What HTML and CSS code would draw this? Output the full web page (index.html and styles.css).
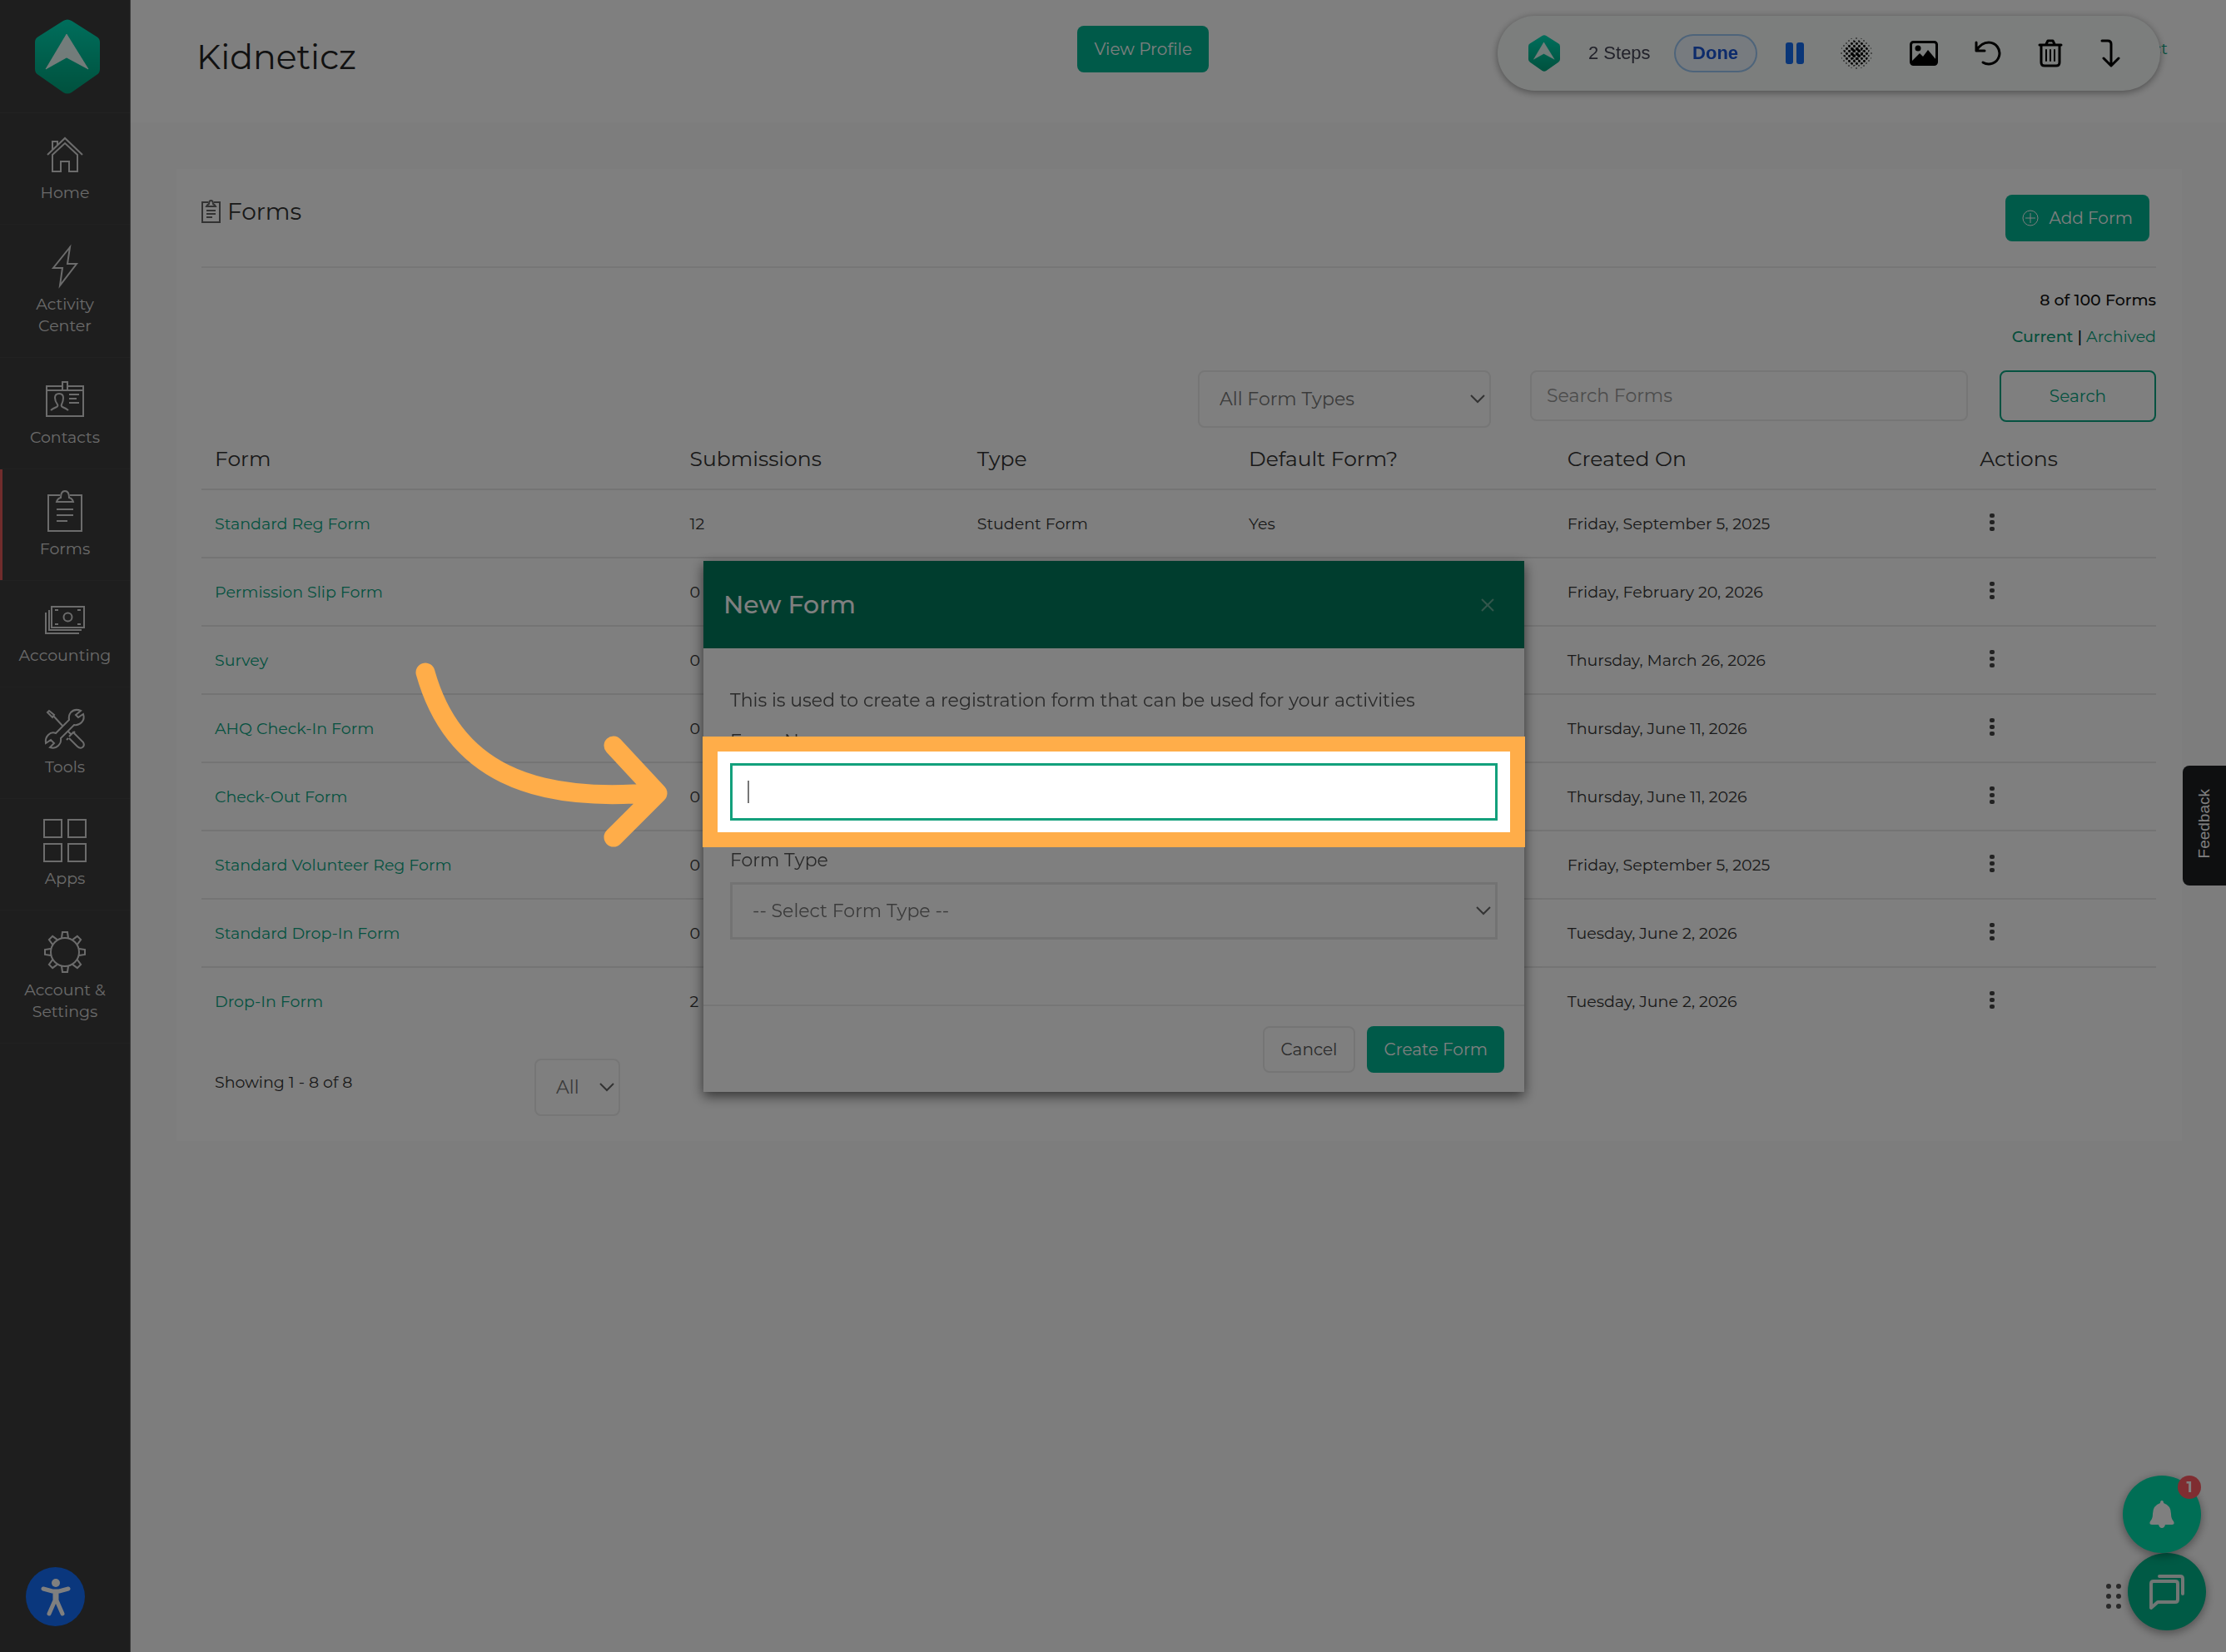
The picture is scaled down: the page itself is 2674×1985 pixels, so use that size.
FILE: index.html
```html
<!DOCTYPE html>
<html lang="en">
<head>
    <meta charset="UTF-8">
    <meta name="viewport" content="width=device-width, initial-scale=1.0">
    <title>Forms - Kidneticz</title>
    <link rel="stylesheet" href="styles.css">
</head>
<body>
    <!-- shared shapes -->
    <svg class="defs" width="0" height="0" aria-hidden="true">
        <defs>
            <linearGradient id="logoFill" x1="0" y1="0" x2="0" y2="1">
                <stop offset="0" stop-color="#00dcb8"/>
                <stop offset="1" stop-color="#00a37c"/>
            </linearGradient>
            <symbol id="logo" viewBox="0 0 78 90">
                <path d="M34 2Q39-1 44 2L74 21Q78 23 78 28V60Q78 65 74 67L44 88Q39 91 34 88L4 67Q0 65 0 60V28Q0 23 4 21Z" fill="url(#logoFill)"/>
                <path d="M38 18L13 60L38 46L64 60Z" fill="#fff" fill-opacity=".9" stroke="#fff" stroke-opacity=".7" stroke-linejoin="round"/>
            </symbol>
            <symbol id="dots" viewBox="0 0 6 22">
                <rect x="0" y="0" width="6" height="5" rx="2"/><rect x="0" y="8" width="6" height="5" rx="2"/><rect x="0" y="16" width="6" height="5" rx="2"/>
            </symbol>
        </defs>
    </svg>

    <div class="page">
        <nav class="sidebar">
            <a href="#" class="brand" aria-label="Kidneticz"><svg width="78" height="90"><use href="#logo"/></svg></a>
            <a href="#" class="navItem">
                <span class="navIcon"><svg width="44" height="44" viewBox="0 0 44 44"><path d="M1 22L22 2L43 22M7 16V6H13V11M7 22L22 8L37 22V42H27V30H17V42H7Z"/></svg></span>
                <span>Home</span>
            </a>
            <a href="#" class="navItem">
                <span class="navIcon"><svg width="30" height="52" viewBox="0 0 30 52"><path d="M21 3L1 28H12L9 49L29 23H18Z"/></svg></span>
                <span>Activity<br>Center</span>
            </a>
            <a href="#" class="navItem">
                <span class="navIcon"><svg width="46" height="44" viewBox="0 0 46 44"><path d="M20 6H1V42H45V6H26M1 11H20M26 11H45M20 11V1H26V11ZM28 16H40M28 21H37M28 26H40M6 35Q8 33 13 31Q15 30 14 28Q11 24 11 20Q11 15 16 15T21 20Q21 24 19 28Q18 30 20 31Q25 33 27 35"/></svg></span>
                <span>Contacts</span>
            </a>
            <a href="#" class="navItem navItem--active">
                <span class="navIcon"><svg width="42" height="50" viewBox="0 0 42 50"><path d="M15 6H1V49H41V6H27M11 14Q12 10 16 9Q16 1 21 1T26 9Q30 10 31 14ZM11 23H31M11 30H31M11 37H24"/></svg></span>
                <span>Forms</span>
            </a>
            <a href="#" class="navItem navItem--short">
                <span class="navIcon"><svg width="48" height="34" viewBox="0 0 48 34"><path d="M8 1H47V26H8ZM5 5V29H44M1 8V33H41M12 5H16M39 5H43M12 22H16M39 22H43"/><circle cx="27.500" cy="13.500" r="5"/></svg></span>
                <span>Accounting</span>
            </a>
            <a href="#" class="navItem">
                <span class="navIcon"><svg width="48" height="48" viewBox="0 0 48 48"><path d="M3 4L5 2L11 7L9 10ZM10 8L21 20M27 26L32 31M29 33L34 28L46 40Q48 44 45 46Q42 48 39 45L29 35M34 29L36 27M28 35L26 37M43 2Q36-1 31 4Q28 8 29 13L13 29Q8 27 4 31Q0 35 1 41L7 37L11 41L6 46Q12 48 16 44Q20 40 19 35L35 19Q40 20 44 16Q48 12 46 6L40 10L37 7Z"/></svg></span>
                <span>Tools</span>
            </a>
            <a href="#" class="navItem">
                <span class="navIcon"><svg width="52" height="52" viewBox="0 0 52 52"><path d="M1 1H22V22H1ZM30 1H51V22H30ZM1 30H22V51H1ZM30 30H51V51H30Z"/></svg></span>
                <span>Apps</span>
            </a>
            <a href="#" class="navItem">
                <span class="navIcon"><svg width="50" height="50" viewBox="-25 -25 50 50"><circle r="17"/><path id="cog" d="M-4-17L-3-24H3L4-17M-4 17L-3 24H3L4 17M-17-4L-24-3V3L-17 4M17-4L24-3V3L17 4"/><use href="#cog" transform="rotate(45)"/></svg></span>
                <span>Account &amp;<br>Settings</span>
            </a>
        </nav>

        <div class="content">
            <header class="topBar">
                <h1 class="topTitle">Kidneticz</h1>
                <button class="btn btn--green">View Profile</button>
                <a href="#" class="topLink">Contact</a>
            </header>

            <main class="panel">
                <div class="panelHead">
                    <h2 class="panelTitle">
                        <svg width="23" height="28" viewBox="0 0 23 28"><path d="M8 3H1V27H22V3H15M6 8Q7 6 9 5Q9 1 11.500 1T14 5Q16 6 17 8ZM6 13H17M6 17H17M6 21H13"/></svg>
                        Forms
                    </h2>
                    <button class="btn btn--green">
                        <svg width="20" height="20" viewBox="0 0 20 20"><circle cx="10" cy="10" r="9"/><path d="M10 4V16M4 10H16"/></svg>
                        Add Form
                    </button>
                </div>

                <div class="counts">
                    <p><b>8 of 100 Forms</b></p>
                    <p><a href="#"><b>Current</b></a> <b>|</b> <a href="#">Archived</a></p>
                </div>

                <form class="filters">
                    <select class="select select--type" aria-label="Form type filter"><option>All Form Types</option></select>
                    <input class="searchInput" type="text" placeholder="Search Forms" aria-label="Search Forms">
                    <button type="button" class="btn btn--outline">Search</button>
                </form>

                <table class="formTable">
                    <thead>
                        <tr>
                            <th class="colForm">Form</th>
                            <th class="colSub">Submissions</th>
                            <th class="colType">Type</th>
                            <th class="colDefault">Default Form?</th>
                            <th class="colCreated">Created On</th>
                            <th>Actions</th>
                        </tr>
                    </thead>
                    <tbody>
                        <tr><td><a href="#">Standard Reg Form</a></td><td>12</td><td>Student Form</td><td>Yes</td><td>Friday, September 5, 2025</td><td><button class="more" aria-label="Actions"><svg width="6" height="22"><use href="#dots"/></svg></button></td></tr>
                        <tr><td><a href="#">Permission Slip Form</a></td><td>0</td><td></td><td></td><td>Friday, February 20, 2026</td><td><button class="more" aria-label="Actions"><svg width="6" height="22"><use href="#dots"/></svg></button></td></tr>
                        <tr><td><a href="#">Survey</a></td><td>0</td><td></td><td></td><td>Thursday, March 26, 2026</td><td><button class="more" aria-label="Actions"><svg width="6" height="22"><use href="#dots"/></svg></button></td></tr>
                        <tr><td><a href="#">AHQ Check-In Form</a></td><td>0</td><td></td><td></td><td>Thursday, June 11, 2026</td><td><button class="more" aria-label="Actions"><svg width="6" height="22"><use href="#dots"/></svg></button></td></tr>
                        <tr><td><a href="#">Check-Out Form</a></td><td>0</td><td></td><td></td><td>Thursday, June 11, 2026</td><td><button class="more" aria-label="Actions"><svg width="6" height="22"><use href="#dots"/></svg></button></td></tr>
                        <tr><td><a href="#">Standard Volunteer Reg Form</a></td><td>0</td><td></td><td></td><td>Friday, September 5, 2025</td><td><button class="more" aria-label="Actions"><svg width="6" height="22"><use href="#dots"/></svg></button></td></tr>
                        <tr><td><a href="#">Standard Drop-In Form</a></td><td>0</td><td></td><td></td><td>Tuesday, June 2, 2026</td><td><button class="more" aria-label="Actions"><svg width="6" height="22"><use href="#dots"/></svg></button></td></tr>
                        <tr><td><a href="#">Drop-In Form</a></td><td>2</td><td></td><td></td><td>Tuesday, June 2, 2026</td><td><button class="more" aria-label="Actions"><svg width="6" height="22"><use href="#dots"/></svg></button></td></tr>
                    </tbody>
                </table>

                <div class="pager">
                    <span class="pagerText">Showing 1 - 8 of 8</span>
                    <select class="select select--page" aria-label="Rows per page"><option>All</option></select>
                </div>
            </main>
        </div>
    </div>

    <!-- recorder toolbar -->
    <div class="recorder">
        <svg class="recLogo" width="38" height="44"><use href="#logo"/></svg>
        <span class="recSteps">2 Steps</span>
        <button class="recDone">Done</button>
        <div class="recTools">
            <button class="recBtn" aria-label="Pause"><svg width="22" height="26" viewBox="0 0 22 26" fill="#146cf0"><rect width="9" height="26" rx="3"/><rect x="13" width="9" height="26" rx="3"/></svg></button>
            <button class="recBtn" aria-label="Blur">
                <svg width="38" height="38" viewBox="0 0 38 38">
                    <pattern id="p1" width="6" height="6" patternUnits="userSpaceOnUse"><circle cx="1" cy="1" r=".8"/><circle cx="4" cy="4" r=".8"/></pattern>
                    <pattern id="p2" width="6" height="6" patternUnits="userSpaceOnUse"><circle cx="1.500" cy="1.500" r="1.400"/><circle cx="4.500" cy="4.500" r="1.400"/></pattern>
                    <pattern id="p3" width="6" height="6" patternUnits="userSpaceOnUse"><circle cx="1.900" cy="1.900" r="1.900"/><circle cx="4.100" cy="4.100" r="1.900"/></pattern>
                    <circle cx="19" cy="19" r="19" fill="url(#p1)"/><circle cx="19" cy="19" r="15" fill="url(#p2)"/><circle cx="19" cy="19" r="8" fill="url(#p3)"/>
                </svg>
            </button>
            <button class="recBtn" aria-label="Image"><svg width="34" height="30" viewBox="0 0 34 30"><rect x="1.500" y="1.500" width="31" height="27" rx="3" fill="none" stroke="#000" stroke-width="3"/><circle cx="10" cy="9" r="3.500"/><path d="M3 28V24L12 15L16 19L22 11L32 23V28Z"/></svg></button>
            <button class="recBtn" aria-label="Undo"><svg width="32" height="32" viewBox="0 0 32 32" fill="none" stroke="#000" stroke-width="3" stroke-linecap="round" stroke-linejoin="round"><path d="M2 3V13H12M2 13Q8 3 17 3A13 13 0 1 1 10 27"/></svg></button>
            <button class="recBtn" aria-label="Delete"><svg width="30" height="34" viewBox="0 0 30 34" fill="none" stroke="#000" stroke-width="3" stroke-linecap="round" stroke-linejoin="round"><path d="M2 7H28M10 6L12 2H18L20 6M4 8V28Q4 32 8 32H22Q26 32 26 28V8"/><path d="M10 13V26M15 13V26M20 13V26" stroke-width="2"/></svg></button>
            <button class="recBtn" aria-label="Collapse"><svg width="24" height="34" viewBox="0 0 24 34" fill="none" stroke="#000" stroke-width="3" stroke-linecap="round" stroke-linejoin="round"><path d="M2 2H9Q13 2 13 6V31M4 23L13 32L22 23"/></svg></button>
        </div>
    </div>

    <button class="feedback"><span>Feedback</span></button>

    <button class="accessBtn" aria-label="Accessibility"><svg width="36" height="46" viewBox="0 0 36 46" fill="none" stroke="#fff" stroke-linecap="round" stroke-linejoin="round"><circle cx="18" cy="6" r="5" fill="#fff" stroke="none"/><path d="M3 13L14 16H22L33 13" stroke-width="5"/><path d="M17 17V27L10 43M19 17V27L26 43" stroke-width="5"/></svg></button>

    <div class="chat">
        <button class="chatBtn chatBtn--bell" aria-label="Notifications">
            <svg width="30" height="34" viewBox="0 0 30 34" fill="#fff"><path d="M15 0Q17 0 17 3Q26 6 26 16Q26 22 29 25Q31 29 27 29H19Q18 33 15 33T11 29H3Q-1 29 1 25Q4 22 4 16Q4 6 13 3Q13 0 15 0Z"/></svg>
            <span class="badge">1</span>
        </button>
        <svg class="grip" width="18" height="30" viewBox="0 0 18 30" fill="#555"><circle cx="3" cy="3" r="3"/><circle cx="15" cy="3" r="3"/><circle cx="3" cy="15" r="3"/><circle cx="15" cy="15" r="3"/><circle cx="3" cy="27" r="3"/><circle cx="15" cy="27" r="3"/></svg>
        <button class="chatBtn chatBtn--talk" aria-label="Chat"><svg width="44" height="44" viewBox="0 0 44 44" fill="none" stroke="#e4efeb" stroke-width="4" stroke-linejoin="round" stroke-linecap="round"><path d="M3 41V12Q3 9 6 9H32Q35 9 35 12V31Q35 34 32 34H11Z"/><path d="M13 3H38Q41 3 41 6V24"/></svg></button>
    </div>

    <!-- new form dialog -->
    <div class="modalWrap">
        <div class="modal" role="dialog" aria-labelledby="modalTitle">
            <div class="modalHead">
                <h2 id="modalTitle">New Form</h2>
                <button class="closeBtn" aria-label="Close"><svg width="16" height="16" viewBox="0 0 16 16"><path d="M1 1L15 15M15 1L1 15"/></svg></button>
            </div>
            <div class="modalBody">
                <p>This is used to create a registration form that can be used for your activities</p>
                <label for="formName">Form Name</label>
                <div class="nameField">
                    <input id="formName" class="nameInput" type="text">
                    <span class="caret"></span>
                    <!-- everything outside the frame is dimmed by its shadow -->
                    <div class="spotlight"></div>
                    <svg class="arrow" width="308" height="226" viewBox="0 0 308 226"><path d="M14 13C47 131 142 171 292 157M240 101L293 158L240 211"/></svg>
                </div>
                <label for="formType">Form Type</label>
                <select id="formType" class="select select--modal"><option>-- Select Form Type --</option></select>
            </div>
            <div class="modalFoot">
                <button class="btn btn--plain">Cancel</button>
                <button class="btn btn--green">Create Form</button>
            </div>
        </div>
    </div>
</body>
</html>
```
FILE: styles.css
```css
*{
    box-sizing: border-box;
    margin: 0;
    padding: 0;
}
body{
    font-family: Montserrat, Inter, sans-serif;
    font-size: 19px;
    color: #333;
    background-color: #fbfbfb;
    overflow-x: hidden;
}
button, input, select{
    font-family: inherit;
}
button{
    border: 0;
    background-color: transparent;
    cursor: pointer;
}
a{
    color: #0aa582;
    text-decoration: none;
}
b{
    font-weight: 500;
}
.defs{
    position: absolute;
}
.page{
    display: flex;
    min-height: 100vh;
}

/* sidebar */
.sidebar{
    flex: 0 0 157px;
    background-color: #3c3c3c;
    border-right: 1px solid #777;
}
.brand{
    display: flex;
    justify-content: center;
    height: 136px;
    padding: 23px 0 0 6px;
    border-bottom: 1px solid #444;
}
.navItem{
    display: flex;
    flex-direction: column;
    align-items: center;
    gap: 6px;
    padding: 23px 0 24px;
    border-bottom: 1px solid #424242;
    line-height: 26px;
    text-align: center;
    color: #d6d6d6;
}
.navItem--active{
    box-shadow: inset 3px 0 #e25858;
}
.navItem--short .navIcon{
    height: 48px;
}
.navIcon{
    display: flex;
    align-items: center;
    height: 54px;
}
.navIcon svg{
    fill: none;
    stroke: #d8d8d8;
    stroke-width: 2;
    overflow: visible;
}

/* top bar */
.content{
    flex: 1;
    min-width: 0;
}
.topBar{
    display: grid;
    grid-template-columns: 447fr 70fr 483fr;
    align-items: start;
    height: 147px;
    padding: 31px 70px 0 79px;
    background-color: #fff;
}
.topTitle{
    font-size: 41px;
    font-weight: 400;
    line-height: 75px;
    color: #222;
}
.topBar .btn{
    justify-self: start;
}
.topLink{
    justify-self: end;
    line-height: 56px;
}
.btn{
    display: inline-flex;
    align-items: center;
    justify-content: center;
    gap: 12px;
    height: 56px;
    padding: 0 20px;
    border-radius: 8px;
    font-size: 20px;
    white-space: nowrap;
}
.btn svg{
    fill: none;
    stroke: #fff;
}
.btn--green{
    background-color: #00b492;
    color: #fff;
}
.btn--plain{
    border: 2px solid #eaeaea;
    background-color: #fff;
    color: #555;
}
.btn--outline{
    flex: 0 0 188px;
    height: 62px;
    border: 2px solid #0aa582;
    color: #0aa582;
}

/* forms panel */
.panel{
    margin: 56px 53px 0 55px;
    padding: 31px 31px 30px 30px;
    background-color: #fff;
}
.panelHead{
    display: flex;
    justify-content: space-between;
    height: 88px;
    padding-right: 8px;
    border-bottom: 2px solid #ececec;
}
.panelTitle{
    display: flex;
    align-items: center;
    gap: 8px;
    height: 40px;
    font-size: 28px;
    font-weight: 400;
}
.panelTitle svg{
    fill: none;
    stroke: #666;
    stroke-width: 2;
}
.counts{
    margin-top: 17px;
    line-height: 44px;
    text-align: right;
}
.counts b{
    color: #111;
}
.counts a b{
    color: #0a9c78;
}
.filters{
    display: flex;
    justify-content: flex-end;
    align-items: flex-start;
    margin-top: 18px;
}
.select{
    appearance: none;
    height: 69px;
    padding: 0 24px;
    border: 2px solid #ececec;
    border-radius: 8px;
    font-size: 22px;
    color: #777;
    background: #fff url("data:image/svg+xml,%3Csvg xmlns='http://www.w3.org/2000/svg' width='18' height='12'%3E%3Cpath d='M1 1L9 9L17 1' fill='none' stroke='%23666' stroke-width='2'/%3E%3C/svg%3E") no-repeat right 5px center;
}
.select--type{
    width: 352px;
    margin-right: 47px;
}
.searchInput{
    flex: 0 1 526px;
    height: 61px;
    margin-right: 38px;
    padding: 0 18px;
    border: 2px solid #ececec;
    border-radius: 8px;
    font-size: 22px;
}
.searchInput::placeholder{
    color: #999;
}
.formTable{
    width: 100%;
    table-layout: fixed;
    border-collapse: collapse;
}
.formTable th{
    height: 74px;
    padding: 0 16px;
    font-size: 25px;
    font-weight: 400;
    text-align: left;
}
.formTable td{
    height: 82px;
    padding: 0 16px;
    border-top: 2px solid #e8e8e8;
}
.colForm{ width: 24.3%; }
.colSub{ width: 14.7%; }
.colType{ width: 13.9%; }
.colDefault{ width: 16.3%; }
.colCreated{ width: 21.1%; }
.more{
    display: block;
    padding: 0 12px;
    fill: #444;
}
.pager{
    display: flex;
    align-items: flex-start;
    margin-top: 28px;
    padding-left: 16px;
}
.pagerText{
    flex: 0 0 384px;
    line-height: 58px;
}
.select--page{
    width: 103px;
}

/* recorder toolbar */
.recorder{
    position: fixed;
    top: 19px;
    right: 79px;
    display: flex;
    align-items: center;
    width: 796px;
    height: 90px;
    padding: 0 48px 0 37px;
    border-radius: 45px;
    background-color: #f9fdfb;
    box-shadow: 0 2px 10px rgba(0,0,0,.4);
    font-family: "Liberation Sans", Arial, sans-serif;
    font-size: 22px;
}
.recSteps{
    margin: 0 28px 0 34px;
    color: #445;
}
.recDone{
    width: 100px;
    height: 46px;
    border: 2px solid #9cc8f4;
    border-radius: 23px;
    background-color: #eef6ff;
    font-family: inherit;
    font-size: 22px;
    font-weight: 700;
    color: #1a56d6;
}
.recTools{
    flex: 1;
    display: flex;
    align-items: center;
    justify-content: space-between;
    margin-left: 34px;
}
.recBtn{
    display: flex;
}

/* floating buttons */
.feedback{
    position: fixed;
    top: 920px;
    right: 0;
    width: 52px;
    height: 144px;
    border-radius: 8px 0 0 8px;
    background-color: #1c1e20;
    font-family: "Liberation Sans", Arial, sans-serif;
    font-size: 19px;
    color: #fff;
}
.feedback span{
    writing-mode: vertical-rl;
    transform: rotate(180deg);
}
.accessBtn{
    position: fixed;
    left: 31px;
    bottom: 31px;
    display: flex;
    align-items: center;
    justify-content: center;
    width: 71px;
    height: 71px;
    border-radius: 50%;
    background-color: #146efa;
}
.chat{
    position: fixed;
    right: 24px;
    bottom: 26px;
    display: grid;
    grid-template-columns: 26px 94px;
    align-items: end;
}
.chatBtn{
    grid-column: 2;
    display: flex;
    align-items: center;
    justify-content: center;
    width: 94px;
    height: 93px;
    border-radius: 50%;
    box-shadow: 0 3px 12px rgba(0,0,0,.4);
}
.chatBtn--bell{
    position: relative;
    right: 6px;
    z-index: 1;
    background-color: #00dcaa;
}
.chatBtn--talk{
    background-color: #00b48a;
}
.grip{
    margin-bottom: 26px;
}
.badge{
    position: absolute;
    top: 0;
    right: 0;
    width: 28px;
    border-radius: 50%;
    background-color: #ff5a62;
    font-size: 18px;
    font-weight: 700;
    line-height: 28px;
    color: #fff;
}

/* modal */
.modalWrap{
    position: fixed;
    inset: 0;
    z-index: 10;
    display: flex;
    align-items: flex-start;
    justify-content: center;
    padding: 674px 0 0 2px;
}
.modal{
    width: 986px;
    max-width: 100%;
    background-color: #fff;
    box-shadow: 0 5px 14px rgba(0,0,0,.6);
}
.modalHead{
    display: flex;
    align-items: center;
    justify-content: space-between;
    height: 105px;
    padding: 0 36px 0 24px;
    background-color: #007a5c;
    color: #fff;
}
.modalHead h2{
    font-size: 30px;
    font-weight: 500;
}
.closeBtn svg{
    display: block;
    fill: none;
    stroke: #66ad97;
    stroke-width: 2;
}
.modalBody{
    display: flex;
    flex-direction: column;
    height: 430px;
    padding: 40px 32px 0;
    border-bottom: 2px solid #ececec;
    font-size: 22px;
    line-height: 46px;
    color: #555;
}
.modalBody label{
    line-height: 52px;
}
.nameField{
    position: relative;
    margin-bottom: 22px;
}
.nameInput{
    display: block;
    width: 100%;
    height: 69px;
    padding: 0 20px;
    border: 3px solid #13a07c;
    font-size: 22px;
}
.caret{
    position: absolute;
    top: 21px;
    left: 21px;
    width: 2px;
    height: 27px;
    background-color: #777;
}
.spotlight{
    position: absolute;
    inset: -32px -33px;
    border: 18px solid #ffad49;
    box-shadow: 0 0 0 4000px rgba(0,0,0,.5);
    pointer-events: none;
}
.arrow{
    position: absolute;
    top: -122px;
    right: 994px;
    fill: none;
    stroke: #ffad49;
    stroke-width: 23;
    stroke-linecap: round;
    stroke-linejoin: round;
}
.select--modal{
    border: 3px solid #e6e6e6;
    border-radius: 0;
}
.modalFoot{
    display: flex;
    justify-content: flex-end;
    gap: 14px;
    padding: 24px 24px 23px;
}
```
